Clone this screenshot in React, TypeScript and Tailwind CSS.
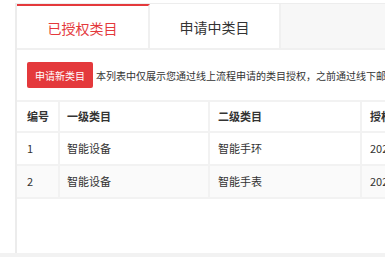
import React from 'react';

const rows = [
  { id: '1', first: '智能设备', second: '智能手环', time: '2023-06-18 10:21:35' },
  { id: '2', first: '智能设备', second: '智能手表', time: '2023-06-18 10:21:35' },
];

function Row({ cells, header, striped }: { cells: string[]; header?: boolean; striped?: boolean }) {
  return (
    <div
      className={`flex border-b-2 border-[#f2f2f2] ${header ? 'h-[31px] font-semibold' : 'h-[33px]'} ${
        striped ? 'bg-[#fafafa]' : 'bg-white'
      }`}
    >
      <div className="w-[43px] shrink-0 border-r-2 border-[#f2f2f2] pl-[10px] flex items-center">{cells[0]}</div>
      <div className="w-[150px] shrink-0 border-r-2 border-[#f2f2f2] pl-[7px] flex items-center">{cells[1]}</div>
      <div className="w-[152px] shrink-0 border-r-2 border-[#f2f2f2] pl-[8px] flex items-center">{cells[2]}</div>
      <div className="w-[160px] shrink-0 pl-[8px] flex items-center whitespace-nowrap">{cells[3]}</div>
    </div>
  );
}

export default function App() {
  return (
    <div
      className="w-[385px] h-[257px] bg-white flex flex-col overflow-hidden text-[#333]"
      style={{ fontFamily: '"Noto Sans CJK SC", "Noto Sans", sans-serif' }}
    >
      <div className="h-[253px] pl-[15px] pt-[3px] flex flex-col">
        <div className="flex-1 flex flex-col border-l-2 border-[#ececec] overflow-hidden">
          {/* tabs */}
          <div className="h-[47px] shrink-0 flex border-t border-[#ededed] border-b-2 border-b-[#f0f0f0] bg-[#f7f7f7]">
            <div className="w-[133px] shrink-0 bg-white border-t-2 border-[#e4393c] border-r-2 border-r-[#f0f0f0] flex items-center justify-center pt-[3px] text-[14px] text-[#e4393c]">
              已授权类目
            </div>
            <div className="w-[131px] shrink-0 bg-white border-r-2 border-[#f0f0f0] flex items-center justify-center pt-[3px] text-[14px] text-[#333]">
              申请中类目
            </div>
          </div>

          {/* toolbar */}
          <div className="flex items-center pl-[10px] pt-[8px] h-[34px] shrink-0 box-content">
            <button className="h-[26px] px-[8px] bg-[#e4393c] text-white text-[10px] rounded-[2px] shrink-0">
              申请新类目
            </button>
            <span className="ml-[3px] text-[10px] whitespace-nowrap">
              本列表中仅展示您通过线上流程申请的类目授权，之前通过线下邮件申请的类目授权请联系运营人员查询
            </span>
          </div>

          {/* table */}
          <div className="mt-[8px] border-t-2 border-[#f2f2f2] text-[11px] w-max">
            <Row header cells={['编号', '一级类目', '二级类目', '授权时间']} />
            {rows.map((r, i) => (
              <Row key={r.id} striped={i % 2 === 1} cells={[r.id, r.first, r.second, r.time]} />
            ))}
          </div>
        </div>
      </div>
      <div className="h-[4px] bg-[#f2f2f2]" />
    </div>
  );
}
